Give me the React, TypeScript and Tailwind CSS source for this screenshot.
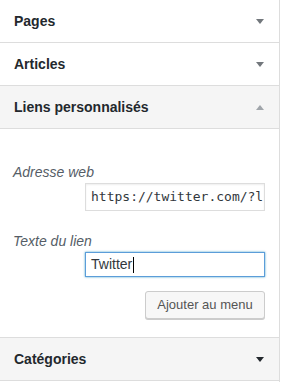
import React from 'react';

const font = { fontFamily: '"Liberation Sans", Arial, sans-serif' };

function Arrow({ dir, color }: { dir: 'down' | 'up'; color: string }) {
  return (
    <svg width="8" height="5" viewBox="0 0 8 5" className="block">
      {dir === 'down' ? (
        <polygon points="0,0 8,0 4,5" fill={color} />
      ) : (
        <polygon points="0,5 8,5 4,0" fill={color} />
      )}
    </svg>
  );
}

function SectionTitle({
  title,
  dir,
  arrowColor,
  gray,
}: {
  title: string;
  dir: 'down' | 'up';
  arrowColor: string;
  gray?: boolean;
}) {
  return (
    <div
      className={`flex h-[43px] items-center justify-between border-b border-[#dddddd] pl-[14px] pr-[15px] ${
        gray ? 'bg-[#f5f5f5]' : 'bg-white'
      }`}
    >
      <span className="text-[14px] font-semibold text-[#23282d]">{title}</span>
      <Arrow dir={dir} color={arrowColor} />
    </div>
  );
}

export default function App() {
  return (
    <div className="h-[382px] w-[281px] bg-white" style={font}>
      <div className="h-full w-[280px] border-r border-[#dddddd]">
        <SectionTitle title="Pages" dir="down" arrowColor="#72777c" />
        <SectionTitle title="Articles" dir="down" arrowColor="#72777c" />
        <SectionTitle title="Liens personnalisés" dir="up" arrowColor="#a0a5aa" gray />

        {/* custom link form */}
        <div className="flex h-[209px] flex-col border-b border-[#dddddd] pl-[13px] pr-[14px] pt-[33px]">
          <div className="h-[20px] text-[14px] italic leading-[20px] text-[#555d66]">Adresse web</div>
          <div className="mt-px flex justify-end">
            <div
              className="h-[28px] w-[180px] overflow-hidden whitespace-nowrap border border-[#dddddd] bg-white pl-[5px] text-[13px] leading-[26px] text-[#32373c] shadow-[inset_0_1px_2px_rgba(0,0,0,0.07)]"
              style={{ fontFamily: '"DejaVu Sans Mono", Menlo, monospace' }}
            >
              https://twitter.com/?l
            </div>
          </div>

          <div className="mt-[20px] h-[20px] text-[14px] italic leading-[20px] text-[#555d66]">Texte du lien</div>
          <div className="mt-px flex justify-end">
            <div className="flex h-[25px] w-[180px] items-center border border-[#5b9dd9] bg-white pl-[5px] text-[14px] text-[#32373c] shadow-[0_0_2px_rgba(30,140,190,0.8)]">
              <span>Twitter</span>
              <span className="ml-px inline-block h-[16px] w-px bg-[#000000]" />
            </div>
          </div>

          <div className="mt-[14px] flex justify-end">
            <button className="h-[28px] w-[120px] rounded-[3px] border border-[#cccccc] bg-[#f7f7f7] text-[13px] text-[#555555] shadow-[0_1px_0_#cccccc]">
              Ajouter au menu
            </button>
          </div>
        </div>

        <SectionTitle title="Catégories" dir="down" arrowColor="#23282d" gray />
      </div>
    </div>
  );
}
